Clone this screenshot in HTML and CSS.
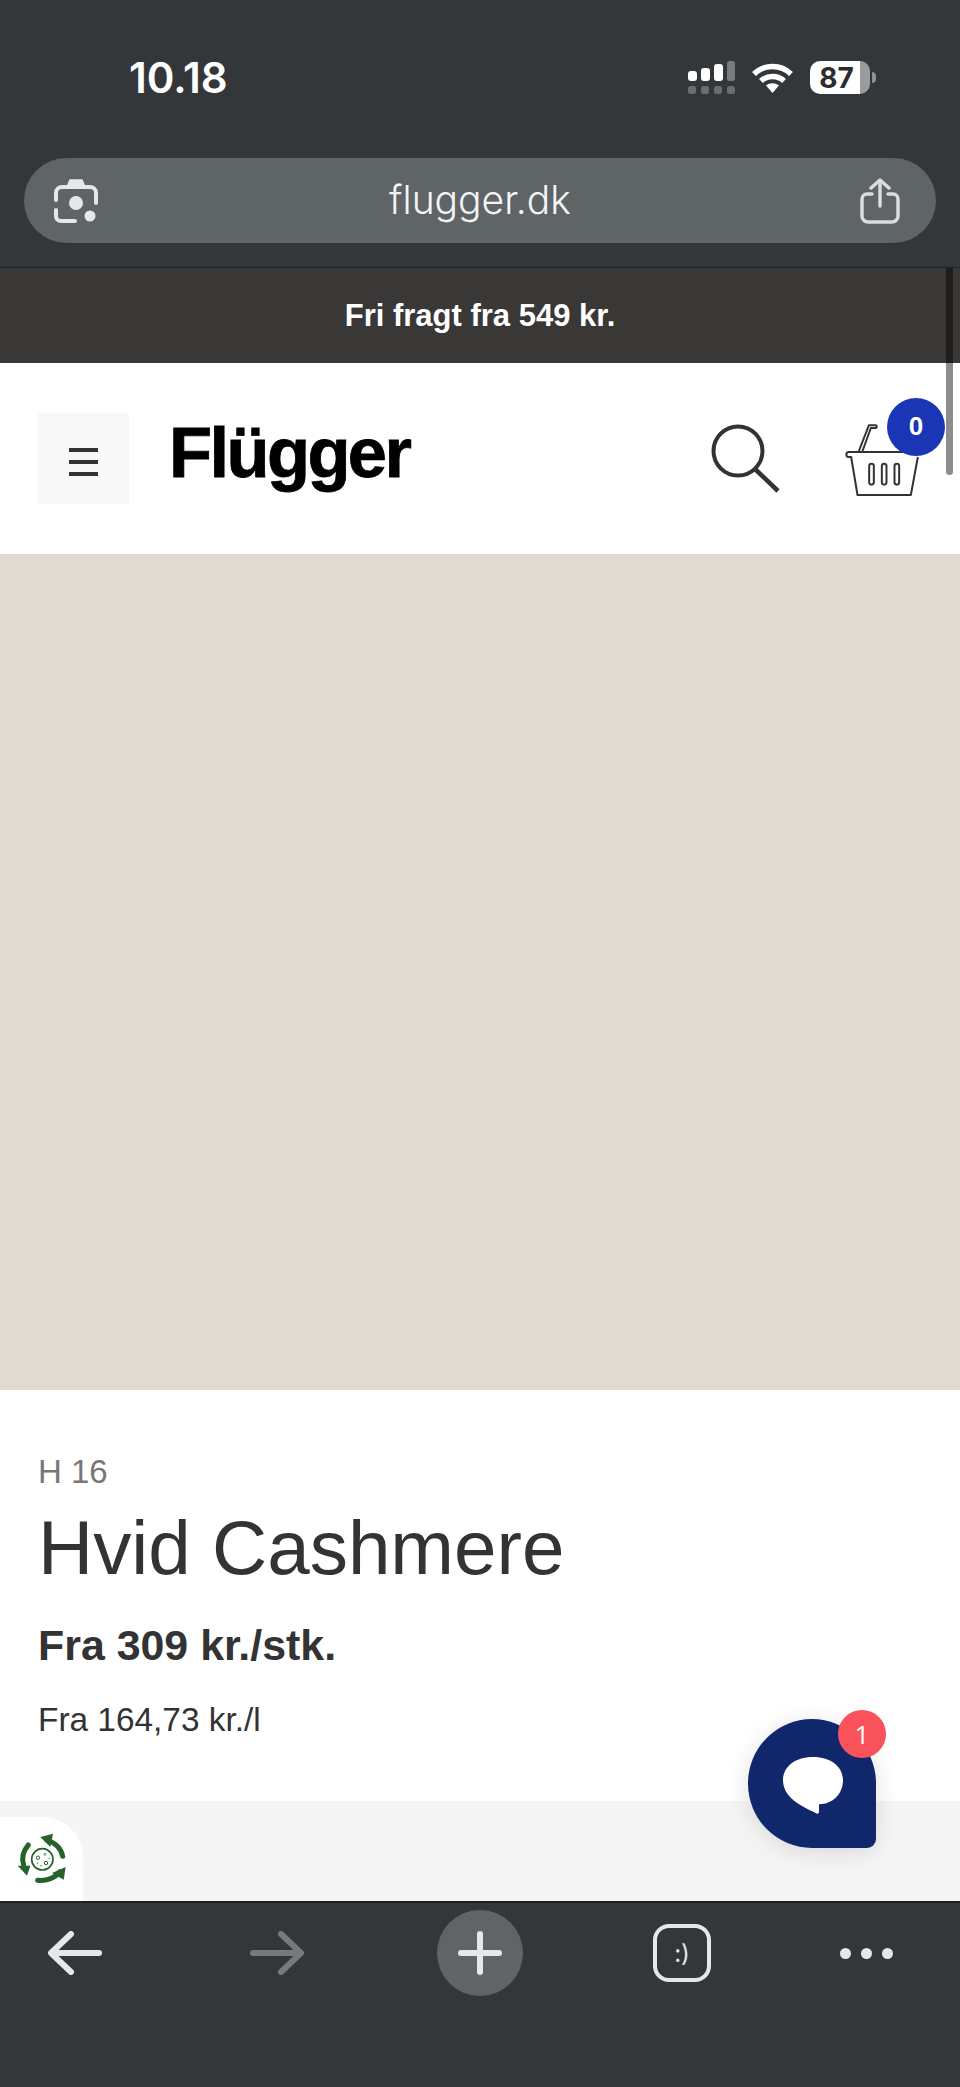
FILE: index.html
```html
<!DOCTYPE html>
<html lang="da">
<head>
    <meta charset="UTF-8">
    <title>Hvid Cashmere - Flügger</title>
    <link rel="stylesheet" href="styles.css">
</head>
<body>
    <div class="phone">
        <div class="browser-top">
            <div class="status-bar">
                <span class="clock">10.18</span>
                <div class="status-icons">
                    <svg class="signal" width="47" height="33" viewBox="0 0 47 33">
                        <rect x="0" y="10" width="9" height="10" rx="3" fill="#fff"/>
                        <rect x="13" y="7" width="9" height="13" rx="3" fill="#fff"/>
                        <rect x="26" y="3" width="9" height="17" rx="3" fill="#fff"/>
                        <rect x="39" y="0" width="8" height="20" rx="2.5" fill="#797b7e"/>
                        <rect x="0" y="25" width="8" height="8" rx="2.5" fill="#6b6d70"/>
                        <rect x="13" y="25" width="8" height="8" rx="2.5" fill="#6b6d70"/>
                        <rect x="26" y="25" width="8" height="8" rx="2.5" fill="#6b6d70"/>
                        <rect x="39" y="25" width="8" height="8" rx="2.5" fill="#6b6d70"/>
                    </svg>
                    <svg class="wifi" width="41" height="31" viewBox="0 0 41 31">
                        <path d="M2 11 C12 1 29 1 39 11" fill="none" stroke="#fff" stroke-width="5.5"/>
                        <path d="M9 18 C15 12 26 12 32 18" fill="none" stroke="#fff" stroke-width="5.5"/>
                        <path d="M14 22.5 C18 19.5 23 19.5 27 22.5 L20.5 30 Z" fill="#fff"/>
                    </svg>
                    <div class="battery">
                        <span class="battery-level">87</span>
                    </div>
                    <span class="battery-nub"></span>
                </div>
            </div>
            <div class="url-bar">
                <svg width="44" height="44" viewBox="0 0 44 44" fill="none" stroke="#e4e7eb" stroke-width="4" stroke-linecap="round">
                    <path d="M2 21 V14 a6 6 0 0 1 6 -6 H36 a6 6 0 0 1 6 6 V24"/>
                    <path d="M2 31 V37 a5 5 0 0 0 5 5 H21"/>
                    <path d="M13 8 L16 1 H28 L31 8 Z" fill="#e4e7eb" stroke-width="1.5"/>
                    <circle cx="22" cy="24" r="7" fill="#e4e7eb" stroke="none"/>
                    <circle cx="36" cy="37" r="5.5" fill="#e4e7eb" stroke="none"/>
                </svg>
                <span class="url-text">flugger.dk</span>
                <svg width="40" height="46" viewBox="0 0 40 46" fill="none" stroke="#d9dce0" stroke-width="3.5" stroke-linecap="round" stroke-linejoin="round">
                    <path d="M12 16 H7 a5 5 0 0 0 -5 5 V38 a6 6 0 0 0 6 6 H32 a6 6 0 0 0 6 -6 V21 a5 5 0 0 0 -5 -5 H28"/>
                    <path d="M20 28 V3"/>
                    <path d="M11 10 L20 2 L29 10"/>
                </svg>
            </div>
        </div>

        <div class="promo">Fri fragt fra 549 kr.</div>

        <header class="site-header">
            <button class="menu-btn">
                <span></span>
                <span></span>
                <span></span>
            </button>
            <div class="logo">Flügger</div>
            <svg class="search-icon" width="70" height="70" viewBox="0 0 70 70" fill="none" stroke="#333" stroke-width="4">
                <circle cx="27" cy="27" r="24.5"/>
                <path d="M44 45 L67 67" stroke-width="4.5"/>
            </svg>
            <div class="cart">
                <svg width="77" height="75" viewBox="555 150 230 225" fill="none" stroke="#333" stroke-width="6" stroke-linejoin="round">
                    <path d="M778 240 H566 a7 7 0 0 0 0 15 H573 L592 369 H752 L773 255"/>
                    <path d="M595 240 L626 160 H646 a4 4 0 0 1 0 8 H632 L606 240"/>
                    <rect x="627" y="275" width="14" height="63" rx="7"/>
                    <rect x="665" y="275" width="14" height="63" rx="7"/>
                    <rect x="703" y="275" width="14" height="63" rx="7"/>
                </svg>
                <span class="cart-count">0</span>
            </div>
        </header>

        <div class="swatch"></div>

        <section class="product">
            <div class="product-code">H 16</div>
            <h1 class="product-name">Hvid Cashmere</h1>
            <div class="product-price">Fra 309 kr./stk.</div>
            <div class="product-unit">Fra 164,73 kr./l</div>
        </section>

        <div class="strip"></div>

        <nav class="bottom-bar">
            <div class="nav-item">
                <svg width="54" height="44" viewBox="0 0 54 44" fill="none" stroke="#e4e7eb" stroke-width="6" stroke-linecap="round" stroke-linejoin="round">
                    <path d="M51 22 H4"/>
                    <path d="M23 3 L3 22 L23 41"/>
                </svg>
            </div>
            <div class="nav-item">
                <svg width="54" height="44" viewBox="0 0 54 44" fill="none" stroke="#77797c" stroke-width="6" stroke-linecap="round" stroke-linejoin="round">
                    <path d="M3 22 H50"/>
                    <path d="M31 3 L51 22 L31 41"/>
                </svg>
            </div>
            <div class="nav-item">
                <div class="plus-btn">
                    <svg width="44" height="44" viewBox="0 0 44 44" fill="none" stroke="#e4e7eb" stroke-width="6" stroke-linecap="round">
                        <path d="M22 3 V41"/>
                        <path d="M3 22 H41"/>
                    </svg>
                </div>
            </div>
            <div class="nav-item">
                <div class="tabs-btn">:)</div>
            </div>
            <div class="nav-item">
                <div class="dots">
                    <span></span>
                    <span></span>
                    <span></span>
                </div>
            </div>
        </nav>

        <!-- overlays -->
        <div class="scrollbar"></div>

        <div class="eco-badge">
            <svg width="50" height="52" viewBox="50 128 150 156" fill="none" stroke="#25632a">
                <path d="M140 150 C165 156 183 175 187 198" stroke-width="15" stroke-linecap="round"/>
                <polygon points="120,140 158,130 150,170" fill="#25632a" stroke="none"/>
                <path d="M112 270 C140 273 165 262 178 245" stroke-width="15" stroke-linecap="round"/>
                <polygon points="196,230 190,268 155,248" fill="#25632a" stroke="none"/>
                <path d="M84 164 C68 182 64 205 70 225" stroke-width="15" stroke-linecap="round"/>
                <polygon points="52,226 90,226 80,256" fill="#25632a" stroke="none"/>
                <circle cx="126" cy="207" r="32" stroke-width="5"/>
                <circle cx="113" cy="202" r="5" stroke-width="3"/>
                <circle cx="137" cy="218" r="5" stroke-width="3"/>
                <circle cx="134" cy="192" r="3" stroke-width="2"/>
                <circle cx="147" cy="204" r="2" fill="#25632a" stroke="none"/>
                <circle cx="122" cy="226" r="2" fill="#25632a" stroke="none"/>
                <circle cx="112" cy="218" r="2" fill="#25632a" stroke="none"/>
            </svg>
        </div>

        <div class="chat">
            <svg width="60" height="57" viewBox="250 230 180 171">
                <path d="M340 230 C395 230 430 260 430 300 C430 340 400 372 358 372 L358 395 C358 400 353 401 349 399 C325 385 250 360 250 300 C250 260 285 230 340 230 Z" fill="#fff"/>
            </svg>
            <span class="chat-count">1</span>
        </div>
    </div>
</body>
</html>
```

FILE: styles.css
```css
* {
    box-sizing: border-box;
}
body {
    margin: 0;
    background-color: #fff;
    font-family: "Liberation Sans", Arial, sans-serif;
    color: #333;
}
.phone {
    position: relative;
    width: 960px;
    height: 2087px;
    overflow: hidden;
    display: flex;
    flex-direction: column;
}

/* browser chrome */
.browser-top {
    height: 268px;
    flex-shrink: 0;
    background-color: #34373a;
    border-bottom: 1px solid #1f2022;
    padding: 0 24px;
}
.status-bar {
    height: 158px;
    display: flex;
    justify-content: space-between;
    align-items: flex-start;
    padding: 56px 0 0 105px;
}
.clock {
    font-family: Inter, sans-serif;
    font-size: 42px;
    line-height: 44px;
    font-weight: 600;
    color: #fff;
}
.status-icons {
    display: flex;
    align-items: flex-start;
    padding: 5px 60px 0 0;
}
.wifi {
    margin: 2px 17px 0 17px;
}
.battery {
    width: 60px;
    height: 33px;
    border-radius: 10px;
    background: linear-gradient(to right, #fff 83%, #9a9b9d 83%);
    display: flex;
    align-items: center;
    justify-content: center;
    padding-right: 7px;
}
.battery-level {
    font-family: Inter, sans-serif;
    font-size: 28px;
    font-weight: 700;
    color: #2c2d2f;
}
.battery-nub {
    width: 4px;
    height: 11px;
    margin: 11px 0 0 2px;
    border-radius: 0 4px 4px 0;
    background-color: #8e9092;
}
.url-bar {
    height: 85px;
    border-radius: 43px;
    background-color: #5f6467;
    display: flex;
    align-items: center;
    justify-content: space-between;
    padding: 0 36px 0 30px;
}
.url-text {
    margin: 0 0 2px 2px;
    font-family: Inter, sans-serif;
    font-size: 39px;
    font-weight: 300;
    color: #f4f5f6;
}
.promo {
    height: 95px;
    flex-shrink: 0;
    background-color: #3a3836;
    color: #fff;
    font-size: 31px;
    font-weight: bold;
    display: flex;
    align-items: center;
    justify-content: center;
}

/* site header */
.site-header {
    height: 191px;
    flex-shrink: 0;
    background-color: #fff;
    display: flex;
    align-items: center;
    padding-left: 38px;
}
.menu-btn {
    width: 91px;
    height: 91px;
    border: none;
    padding: 6px 0 0;
    background-color: #f8f8f8;
    display: flex;
    flex-direction: column;
    align-items: center;
    justify-content: center;
    gap: 8px;
}
.menu-btn span {
    width: 29px;
    height: 4px;
    background-color: #333;
}
.logo {
    margin: -12px 0 0 40px;
    font-size: 70.5px;
    font-weight: bold;
    letter-spacing: -2.6px;
    color: #000;
    -webkit-text-stroke: 0.8px #000;
}
.search-icon {
    margin: 0 0 0 auto;
}
.cart {
    position: relative;
    width: 77px;
    margin: 1px 38px 0 64px;
}
.cart svg {
    display: block;
}
.cart-count {
    position: absolute;
    top: -24px;
    left: 42px;
    width: 58px;
    height: 58px;
    border-radius: 50%;
    background-color: #1a35b5;
    color: #fff;
    font-size: 26px;
    font-weight: bold;
    display: flex;
    align-items: center;
    justify-content: center;
}

/* product */
.swatch {
    height: 836px;
    flex-shrink: 0;
    background-color: #e0dad0;
}
.product {
    height: 411px;
    flex-shrink: 0;
    padding: 62px 38px 0;
}
.product-code {
    font-size: 33px;
    line-height: 40px;
    color: #777;
}
.product-name {
    margin: 13px 0 0;
    font-size: 76.4px;
    line-height: 86px;
    font-weight: normal;
    color: #333;
}
.product-price {
    margin-top: 29px;
    font-size: 42.9px;
    line-height: 50px;
    font-weight: bold;
}
.product-unit {
    margin-top: 30px;
    font-size: 33.4px;
    line-height: 40px;
}
.strip {
    height: 100px;
    flex-shrink: 0;
    background-color: #f5f5f5;
}

/* bottom toolbar */
.bottom-bar {
    flex: 1;
    background-color: #34373a;
    border-top: 2px solid #1f2022;
    display: grid;
    grid-template-columns: 150px 254px 152px 252px 116px;
    align-items: start;
    justify-items: center;
    padding-top: 7px;
}
.nav-item {
    height: 86px;
    display: flex;
    align-items: center;
    justify-content: center;
}
.plus-btn {
    width: 86px;
    height: 86px;
    border-radius: 50%;
    background-color: #5f6467;
    display: flex;
    align-items: center;
    justify-content: center;
}
.tabs-btn {
    width: 58px;
    height: 58px;
    border: 4px solid #e4e7eb;
    border-radius: 16px;
    color: #e4e7eb;
    font-family: Inter, sans-serif;
    font-size: 24px;
    display: flex;
    align-items: center;
    justify-content: center;
}
.dots {
    display: flex;
    gap: 10px;
}
.dots span {
    width: 11px;
    height: 11px;
    border-radius: 50%;
    background-color: #e4e7eb;
}

/* things lying over the page */
.scrollbar {
    position: absolute;
    top: 268px;
    left: 946px;
    width: 7px;
    height: 207px;
    border-radius: 0 0 4px 4px;
    background-color: rgba(0, 0, 0, 0.45);
}
.eco-badge {
    position: absolute;
    top: 1817px;
    left: 0;
    width: 83px;
    height: 84px;
    border-radius: 0 40px 0 0;
    background-color: #fff;
    display: flex;
    align-items: center;
    justify-content: center;
}
.chat {
    position: absolute;
    top: 1719px;
    left: 748px;
    width: 128px;
    height: 129px;
    border-radius: 50% 50% 9px 50%;
    background-color: #10286b;
    box-shadow: 0 4px 24px rgba(0, 0, 0, 0.12);
    display: flex;
    align-items: center;
    justify-content: center;
}
.chat svg {
    margin: 4px 0 0 2px;
}
.chat-count {
    position: absolute;
    top: -9px;
    left: 90px;
    width: 48px;
    height: 48px;
    border-radius: 50%;
    background-color: #f9525a;
    color: #fff;
    font-family: "Open Sans", sans-serif;
    font-size: 26px;
    display: flex;
    align-items: center;
    justify-content: center;
}
```
